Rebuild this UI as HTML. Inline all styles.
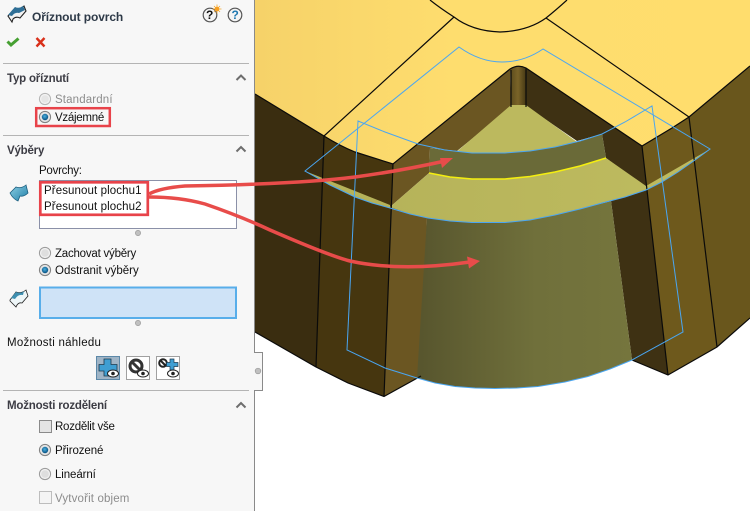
<!DOCTYPE html>
<html><head><meta charset="utf-8"><style>
html,body{margin:0;padding:0;background:#fff}
#p{position:relative;width:750px;height:511px;overflow:hidden;background:#fff;font-family:"Liberation Sans",sans-serif;font-size:11.5px;color:#111}
#p>svg{position:absolute;left:0;top:0}
.t{position:absolute;white-space:nowrap;line-height:14px;margin-top:1px}
.h{font-weight:bold;color:#3c3c44;letter-spacing:-.2px}
.g{color:#8c8c8c}
</style></head><body><div id="p">
<svg width="750" height="511" viewBox="0 0 750 511">
<defs>
<linearGradient id="top" x1="0" x2="1"><stop offset="0" stop-color="#f6d269"/><stop offset=".4" stop-color="#fedd6e"/><stop offset="1" stop-color="#ffdd6d"/></linearGradient>
<linearGradient id="cone" gradientUnits="userSpaceOnUse" x1="421" x2="630" y1="0" y2="0"><stop offset="0" stop-color="#58562e"/><stop offset=".55" stop-color="#70703b"/><stop offset="1" stop-color="#75753d"/></linearGradient>
<linearGradient id="fil" x1="0" x2="1"><stop offset="0" stop-color="#5a4a1c"/><stop offset=".5" stop-color="#7a6428"/><stop offset="1" stop-color="#463814"/></linearGradient>
<linearGradient id="sheet" gradientUnits="userSpaceOnUse" x1="390" x2="646" y1="0" y2="0"><stop offset="0" stop-color="#b6b35a"/><stop offset="1" stop-color="#bdba5e"/></linearGradient>
<radialGradient id="rb" cx=".45" cy=".4" r=".6"><stop offset="0" stop-color="#4ab0e0"/><stop offset="1" stop-color="#064f80"/></radialGradient>
<linearGradient id="ic" x1="0" x2="1" y1="0" y2="1"><stop offset="0" stop-color="#8fd0e4"/><stop offset="1" stop-color="#1f7fa8"/></linearGradient>
<g id="radio"><circle r="5.6" fill="#f0f0f0" stroke="#9a9a9a"/><circle r="3.8" fill="#dedede"/></g>
<g id="radon"><circle r="5.6" fill="#e4e4e4" stroke="#808080"/><circle r="3.2" fill="url(#rb)"/></g>
</defs>
<!-- model -->
<path d="M255 0H750V66L689 117 642 146 526 68Q518 64 510 69L393 164 355 152Q338 146 324 136L255 94Z" fill="url(#top)"/>
<path d="M255 94L324 136Q340 146 355 152L393 164 384 396.5 348 383 316 367 255 332Z" fill="#46360f"/>
<path d="M255 94L324 136 316 367 255 332Z" fill="#3a2d10"/>
<path d="M642 146L689 117 717 347 668 375Z" fill="#6e591c"/>
<path d="M689 117L750 66V318L717 347Z" fill="#69561c"/>
<!-- inner left wall -->
<path d="M393 164L510 69 511 107 457 151 430 148 429 173 390 207 427 218 421 376 384 396.5Z" fill="#6b5622"/>
<path d="M510 69Q518 64 526 68L526 107H511Z" fill="url(#fil)"/>
<!-- inner right wall -->
<path d="M526 68L642 146 668 375 632 360 611 201 646 188 606 158 602 134 577 141 526 106Z" fill="#3e3113"/>
<!-- cone -->
<path d="M427 218L450 221 472 222.500 505 222.500 530 220 555 215 580 209 611 201 632 360 610 369 588 376.500 565 382 538 386.500 517 388 495 388.500 475 388 455 386.500 435 383 417 378Z" fill="url(#cone)"/>
<!-- upper triangle -->
<path d="M511 105H526L577 142 555 147 530 151 505 153 472 153 457 151.500Z" fill="#bcb95e"/>
<!-- band -->
<path d="M430 148L445 150 472 153 505 153 530 151 555 147 580 141 602 134 606 158 580 166 555 172 530 176.500 505 179 472 179 450 177 429 173Z" fill="#6a6a38"/>
<!-- lower sheet -->
<path d="M390 207L429 173 450 177 472 179 505 179 530 176.500 555 172 580 166 606 158 646 186 710 149 695 160 678 172 662 182 646 190 625 197 602 203 580 209 555 215 530 220 505 222.500 472 222.500 450 221 428 218 410 214Z" fill="url(#sheet)"/>
<path d="M305 171L390 205 390 208 372 203 355 197 330 185Z" fill="#b5b25a"/>
<g fill="none" stroke="#0a0a0a" stroke-width="1.2">
<path d="M430 0Q440 8 454 17 472 31 500 32 528 31 546 18 556 10 567 0"/>
<path d="M454 17L324 136M546 18L689 117"/>
<path d="M255 94L324 136Q340 146 355 152L393 164 510 69Q518 64 526 68L642 146 672 128 689 117 750 66"/>
<path d="M255 332L316 367 348 383 384 396.5 421 376M632 360L668 375 717 347 750 318"/>
<path d="M324 136L316 367M393 164L384 396.5M642 146L668 375M689 117L717 347M511 70V107M526 68V107"/>
</g>
<path d="M429 173L450 177 472 179 505 179 530 176.500 555 172 580 166 606 158" fill="none" stroke="#f4ee10" stroke-width="1.600"/>
<g fill="none" stroke="#4aa6f2" stroke-width="1">
<path d="M459 47Q480 62 502 62 524 62 543 49L710 149 695 160 678 172 662 182 646 190 625 197 602 203 580 209 555 215 530 220 505 222.500 472 222.500 450 221 428 218 410 214 390 208 372 203 355 197 330 185 305 171Z"/>
<path d="M358 121L385 132 418 144 445 150 472 153 505 153 530 151 555 147 580 141 602 134 625 122 652 106 683 332 632 360 610 369 588 376.500 565 382 538 386.500 517 388 495 388.500 475 388 455 386.500 435 383 417 378 385 368 347 350Z"/>
</g>
<!-- panel -->
<rect x="0" y="0" width="254" height="511" fill="#f7f7f7"/>
<path d="M254.500 0V352.500H262.500V390.500H254.500V511" fill="none" stroke="#8a8a8a"/>
<rect x="254" y="353" width="8" height="37" fill="#f7f7f7"/>
<circle cx="258" cy="371" r="2.800" fill="#c0c0c0" stroke="#9a9a9a" stroke-width=".7"/>
<path d="M3 63.500H249M3 135.500H249M3 390.500H249" stroke="#b4b4b4"/>
<!-- title icon -->
<path d="M8 16L15 8Q19 10 24 6L26 11 20 18Q16 16 13 19L12 22Z" fill="#f2f2f2" stroke="#222" stroke-width="1.100"/>
<path d="M8 15L15 7Q19 9 23 6L25 10 19 13Q15 12 12 16Z" fill="#2f6f96"/>
<path d="M7.500 41.500L11 45 18.500 38.500" fill="none" stroke="#46a032" stroke-width="3"/>
<path d="M36.500 38L44.500 46.500M44.500 38L36.500 46.500" fill="none" stroke="#d9301a" stroke-width="2.400"/>
<!-- help icons -->
<circle cx="210" cy="15" r="6.800" fill="#f4f4f4" stroke="#555" stroke-width="1.200"/>
<circle cx="235" cy="15" r="6.800" fill="#f4f4f4" stroke="#555" stroke-width="1.200"/>
<path d="M217 4.500V13.500M212.500 9H221.500M214 6L220 12M220 6L214 12" stroke="#f4a52a" stroke-width=".8"/>
<circle cx="217" cy="9" r="2.300" fill="#f7a020"/>
<!-- chevrons -->
<path d="M236.500 80L241 75.500 245.500 80M236.500 151.500L241 147 245.500 151.500M236.500 407.500L241 403 245.500 407.500" fill="none" stroke="#6e6e6e" stroke-width="2"/>
<!-- radios -->
<use href="#radio" x="45" y="99" opacity=".7"/>
<use href="#radon" x="45" y="117"/>
<use href="#radio" x="45" y="253"/>
<use href="#radon" x="45" y="270"/>
<use href="#radon" x="45" y="450"/>
<use href="#radio" x="45" y="474"/>
<rect x="36.200" y="108.200" width="73.600" height="17.800" fill="none" stroke="#e8434a" stroke-width="2.500"/>
<!-- list boxes -->
<rect x="39.500" y="180.500" width="197" height="48" fill="#fff" stroke="#8b90a8"/>
<rect x="40.300" y="182.300" width="107.500" height="32.500" fill="#fff" stroke="#e8434a" stroke-width="2.700"/>
<circle cx="138" cy="233" r="2.600" fill="#c0c0c0" stroke="#9a9a9a" stroke-width=".7"/>
<rect x="40" y="287.500" width="196" height="30.500" fill="#cfe3f7" stroke="#58aeea" stroke-width="2"/>
<circle cx="138" cy="323" r="2.600" fill="#c0c0c0" stroke="#9a9a9a" stroke-width=".7"/>
<!-- side icons -->
<path d="M10 193L16 187Q21 189 26 185L28 193Q24 197 20 196L18 201Q13 199 10 193Z" fill="url(#ic)" stroke="#1d5f80" stroke-width=".8"/>
<path d="M10 300L16 292Q21 294 26 290L28 296 22 303Q18 302 16 307L10 301Z" fill="#eef6f8" stroke="#222" stroke-width=".8"/>
<path d="M11 298L16 292Q21 294 24 291L23 295Q18 294 15 299Z" fill="#3f8fb0"/>
<!-- preview buttons -->
<rect x="96.500" y="356.500" width="23" height="23" fill="#9fb4c6" stroke="#5c88a8"/>
<rect x="126.500" y="356.500" width="23" height="23" fill="#fff" stroke="#a0a0a0"/>
<rect x="156.500" y="356.500" width="23" height="23" fill="#fff" stroke="#a0a0a0"/>
<path d="M104 359H111V364.500H117V371H111V376H104V371H99V364.500H104Z" fill="#3f9ed2" stroke="#1e3a4e" stroke-width=".8"/>
<circle cx="136" cy="366" r="6" fill="none" stroke="#333" stroke-width="3"/>
<path d="M132 362L140 370" stroke="#333" stroke-width="3"/>
<circle cx="163" cy="363" r="3.800" fill="none" stroke="#222" stroke-width="2"/>
<path d="M160.500 360.500L165.500 365.500" stroke="#222" stroke-width="2"/>
<path d="M170 359H174V362.500H178V366.500H174V370H170V366.500H166.500V362.500H170Z" fill="#3f9ed2" stroke="#1e3a4e" stroke-width=".7"/>
<g fill="#fff" stroke="#222" stroke-width="1"><ellipse cx="113" cy="373.500" rx="5.500" ry="3.500"/><ellipse cx="143" cy="373.500" rx="5.500" ry="3.500"/><ellipse cx="173" cy="373.500" rx="5.500" ry="3.500"/></g>
<g fill="#222"><circle cx="113" cy="373.500" r="1.800"/><circle cx="143" cy="373.500" r="1.800"/><circle cx="173" cy="373.500" r="1.800"/></g>
<!-- checkboxes -->
<rect x="39.500" y="420.500" width="12" height="12" fill="#e4e4e4" stroke="#8a8a8a"/>
<rect x="39.500" y="491.500" width="12" height="12" fill="#f4f4f4" stroke="#bdbdbd"/>
<!-- arrows -->
<g fill="none" stroke="#e84c4a" stroke-width="3.500">
<path d="M149 194Q160 188 185 186 300 184 355 177 400 171 445 161"/>
<path d="M149 197Q180 197 205 204 240 216 270 230 330 256 350 261 400 272 470 262"/>
</g>
<path d="M440 158L453 158 442 168Z M467 256.500L480 261 469 268.500Z" fill="#e84c4a"/>
</svg>
<div class="t h" style="left:32px;top:9px;font-size:12px;color:#2e3a48;letter-spacing:-.1px">Oříznout povrch</div>
<div class="t" style="left:206px;top:7px;font-weight:bold;font-size:12px">?</div>
<div class="t" style="left:231.500px;top:7px;font-weight:bold;font-size:12px;color:#1f78b0">?</div>
<div class="t h" style="left:7px;top:71px">Typ oříznutí</div>
<div class="t g" style="left:55px;top:92px;letter-spacing:.14px">Standardní</div>
<div class="t" style="left:55px;top:110px;letter-spacing:-.27px">Vzájemné</div>
<div class="t h" style="left:7px;top:143px">Výběry</div>
<div class="t" style="left:39px;top:163px;letter-spacing:-.25px">Povrchy:</div>
<div class="t" style="left:44px;top:183px;letter-spacing:.1px">Přesunout plochu1</div>
<div class="t" style="left:44px;top:199px;letter-spacing:.1px">Přesunout plochu2</div>
<div class="t" style="left:55px;top:246px;letter-spacing:-.22px">Zachovat výběry</div>
<div class="t" style="left:55px;top:263px">Odstranit výběry</div>
<div class="t" style="left:7px;top:335px;letter-spacing:.25px">Možnosti náhledu</div>
<div class="t h" style="left:7px;top:398px">Možnosti rozdělení</div>
<div class="t" style="left:55px;top:419px;letter-spacing:-.25px">Rozdělit vše</div>
<div class="t" style="left:55px;top:443px;letter-spacing:-.1px">Přirozené</div>
<div class="t" style="left:55px;top:467px;letter-spacing:-.1px">Lineární</div>
<div class="t g" style="left:55px;top:491px;letter-spacing:.15px">Vytvořit objem</div>
</div></body></html>
